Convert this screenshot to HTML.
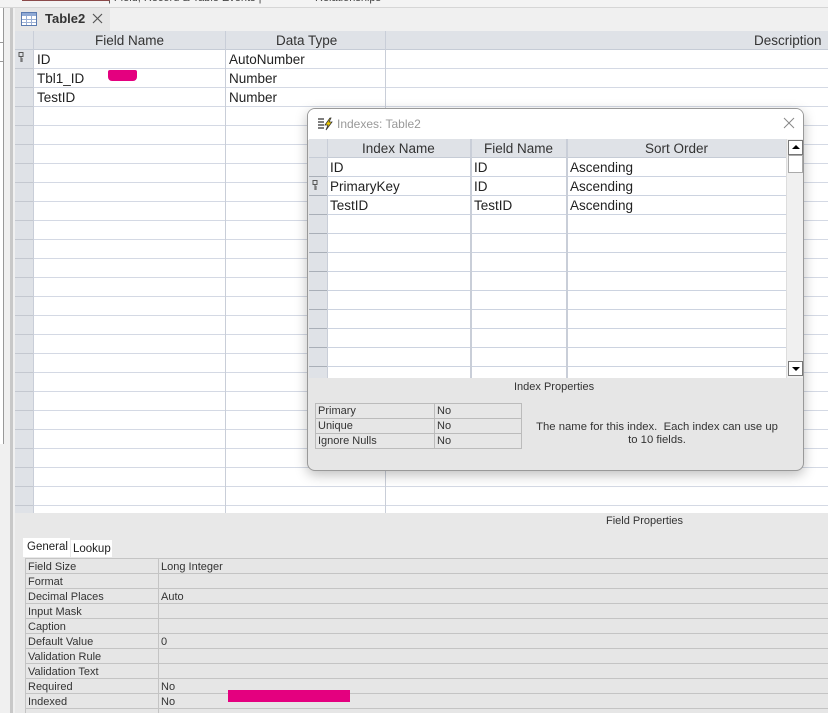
<!DOCTYPE html>
<html><head><meta charset="utf-8"><style>
*{box-sizing:border-box;margin:0;padding:0}
body{width:828px;height:713px;position:relative;overflow:hidden;background:#f0f0f0;font-family:"Liberation Sans",sans-serif;color:#222}
.a{position:absolute}
.t{font-size:13.5px;line-height:19px;white-space:nowrap}
.s{font-size:11px;white-space:nowrap}
</style></head><body>
<div class="a" style="left:0;top:0;width:828px;height:8px;background:#f3f3f3;border-bottom:1px solid #d6d6d6"></div>
<div class="a s" style="left:22px;top:-8px;color:#444">Show/Hide</div>
<div class="a s" style="left:108px;top:-8px;color:#444">| Field, Record &amp; Table Events |</div>
<div class="a s" style="left:315px;top:-8px;color:#444">Relationships</div>
<div class="a" style="left:22px;top:0;width:88px;height:1px;background:#8b4a4a"></div>
<div class="a" style="left:0;top:8px;width:4px;height:436px;background:#fff;border-right:1px solid #999"></div>
<div class="a" style="left:0;top:42px;width:4px;height:20px;border:1px solid #999;border-left:0"></div>
<div class="a" style="left:10px;top:8px;width:3px;height:705px;background:#c8c8c8"></div>
<div class="a" style="left:15px;top:8px;width:813px;height:23px;background:#f0f0f0"></div>
<div class="a" style="left:15px;top:8px;width:95px;height:23px;background:#e6e6e6"></div>
<svg class="a" style="left:21px;top:12px" width="16" height="14"><rect x="0.5" y="0.5" width="15" height="13" fill="#fff" stroke="#5b7bb0"/><rect x="1" y="1" width="14" height="3" fill="#8fa9d4"/><path d="M1 7.5H15M1 10.5H15M5.5 4V13M10.5 4V13" stroke="#9bb0d4"/></svg>
<div class="a" style="left:45px;top:11px;font-size:13px;font-weight:bold;color:#333">Table2</div>
<svg class="a" style="left:92px;top:13px" width="11" height="11"><path d="M1 1L10 10M10 1L1 10" stroke="#555" stroke-width="1.2"/></svg>
<div class="a" style="left:15px;top:31px;width:813px;height:482px;background:#fff repeating-linear-gradient(to bottom,transparent 0 18px,#d4d9e4 18px 19px)"></div>
<div class="a" style="left:15px;top:31px;width:813px;height:19px;background:#dfe2e7;border-bottom:1px solid #c6ccd6"></div>
<div class="a" style="left:15px;top:50px;width:18px;height:463px;background:#dfe2e7 repeating-linear-gradient(to bottom,transparent 0 18px,#c4c8d0 18px 19px)"></div>
<div class="a" style="left:33px;top:31px;width:1px;height:482px;background:#c9ced8"></div>
<div class="a" style="left:225px;top:31px;width:1px;height:482px;background:#c9ced8"></div>
<div class="a" style="left:385px;top:31px;width:1px;height:482px;background:#c9ced8"></div>
<div class="a t" style="left:95px;top:31px;color:#333">Field Name</div>
<div class="a t" style="left:276px;top:31px;color:#333">Data Type</div>
<div class="a t" style="left:754px;top:31px;color:#333">Description</div>
<svg class="a" style="left:18px;top:52px" width="6" height="11"><rect x="1" y="0.5" width="4" height="4" fill="none" stroke="#555"/><path d="M3 4V10M3 7H5M3 9H5" stroke="#555"/></svg>
<div class="a t" style="left:37px;top:50px">ID</div><div class="a t" style="left:229px;top:50px">AutoNumber</div>
<div class="a t" style="left:37px;top:69px">Tbl1_ID</div><div class="a t" style="left:229px;top:69px">Number</div>
<div class="a t" style="left:37px;top:88px">TestID</div><div class="a t" style="left:229px;top:88px">Number</div>
<div class="a" style="left:108px;top:70px;width:29px;height:11px;background:#e4007f;border-radius:2px 2px 4px 4px"></div>
<div class="a" style="left:15px;top:513px;width:813px;height:200px;background:#e8e8e8"></div>
<div class="a s" style="left:606px;top:515px;color:#333">Field Properties</div>
<div class="a" style="left:23px;top:538px;width:47px;height:19px;background:#fff"></div>
<div class="a s" style="left:27px;top:541px;font-size:11.5px">General</div>
<div class="a" style="left:71px;top:540px;width:41px;height:17px;background:#fff"></div>
<div class="a s" style="left:73px;top:543px;font-size:11.5px">Lookup</div>
<div class="a" style="left:25px;top:558px;width:803px;height:155px;background:#e6e6e6 repeating-linear-gradient(to bottom,transparent 0 14px,#c4c4c4 14px 15px);border-left:1px solid #c4c4c4;border-top:1px solid #c4c4c4"></div>
<div class="a" style="left:158px;top:558px;width:1px;height:155px;background:#c4c4c4"></div>
<div class="a s" style="left:28px;top:560px;line-height:15px;color:#333">Field Size<br>Format<br>Decimal Places<br>Input Mask<br>Caption<br>Default Value<br>Validation Rule<br>Validation Text<br>Required<br>Indexed</div>
<div class="a s" style="left:161px;top:560px;line-height:15px;color:#333">Long Integer<br><br>Auto<br><br><br>0<br><br><br>No<br>No</div>
<div class="a" style="left:228px;top:690px;width:122px;height:12px;background:#e4007f"></div>
<div class="a" style="left:307px;top:108px;width:497px;height:363px;background:#e6e6e6;border:1px solid #999;border-radius:8px;box-shadow:0 4px 12px rgba(0,0,0,.25);overflow:hidden">
<div class="a" style="left:0;top:0;width:497px;height:31px;background:#fff"></div>
<svg class="a" style="left:9px;top:8px" width="18" height="14"><path d="M1 2H7M1 5H7M1 8H7M1 11H7" stroke="#333" stroke-width="1.2"/><path d="M13 1L8 8H11L9 13L15 5H12L14 1Z" fill="#f5d000" stroke="#333" stroke-width=".8"/></svg>
<div class="a" style="left:29px;top:8px;font-size:12px;color:#999">Indexes: Table2</div>
<svg class="a" style="left:475px;top:8px" width="12" height="12"><path d="M1 1L11 11M11 1L1 11" stroke="#888" stroke-width="1"/></svg>
<div class="a" style="left:1px;top:30px;width:478px;height:239px;background:#fff repeating-linear-gradient(to bottom,transparent 0 18px,#ccd3e0 18px 19px)"></div>
<div class="a" style="left:1px;top:30px;width:478px;height:19px;background:#dfe2e7;border-bottom:1px solid #c6ccd6"></div>
<div class="a" style="left:1px;top:49px;width:18px;height:220px;background:#dfe2e7 repeating-linear-gradient(to bottom,transparent 0 18px,#a9afb8 18px 19px)"></div>
<div class="a" style="left:19px;top:30px;width:1px;height:239px;background:#c9ced8"></div>
<div class="a" style="left:162px;top:30px;width:2px;height:239px;background:#c9ced8"></div>
<div class="a" style="left:258px;top:30px;width:2px;height:239px;background:#c9ced8"></div>
<div class="a t" style="left:54px;top:30px;color:#333">Index Name</div>
<div class="a t" style="left:176px;top:30px;color:#333">Field Name</div>
<div class="a t" style="left:337px;top:30px;color:#333">Sort Order</div>
<svg class="a" style="left:4px;top:71px" width="6" height="11"><rect x="1" y="0.5" width="4" height="4" fill="none" stroke="#555"/><path d="M3 4V10M3 7H5M3 9H5" stroke="#555"/></svg>
<div class="a t" style="left:22px;top:49px">ID</div><div class="a t" style="left:166px;top:49px">ID</div><div class="a t" style="left:262px;top:49px">Ascending</div>
<div class="a t" style="left:22px;top:68px">PrimaryKey</div><div class="a t" style="left:166px;top:68px">ID</div><div class="a t" style="left:262px;top:68px">Ascending</div>
<div class="a t" style="left:22px;top:87px">TestID</div><div class="a t" style="left:166px;top:87px">TestID</div><div class="a t" style="left:262px;top:87px">Ascending</div>
<div class="a" style="left:478px;top:30px;width:18px;height:239px;background:#f0f0f0;border-left:1px solid #ddd"></div>
<div class="a" style="left:480px;top:31px;width:15px;height:15px;background:#fff;border:1px solid #777"></div>
<div class="a" style="left:484px;top:36px;width:0;height:0;border:4px solid transparent;border-bottom:4px solid #000;border-top:0"></div>
<div class="a" style="left:480px;top:46px;width:15px;height:18px;background:#fff;border:1px solid #aaa"></div>
<div class="a" style="left:480px;top:252px;width:15px;height:15px;background:#fff;border:1px solid #777"></div>
<div class="a" style="left:484px;top:258px;width:0;height:0;border:4px solid transparent;border-top:4px solid #000;border-bottom:0"></div>
<div class="a s" style="left:206px;top:272px;color:#333">Index Properties</div>
<div class="a" style="left:7px;top:294px;width:207px;height:46px;border:1px solid #bbb;background:repeating-linear-gradient(to bottom,transparent 0 14px,#bbb 14px 15px)"></div>
<div class="a" style="left:126px;top:294px;width:1px;height:46px;background:#bbb"></div>
<div class="a s" style="left:10px;top:295px;line-height:15px;color:#333">Primary<br>Unique<br>Ignore Nulls</div>
<div class="a s" style="left:129px;top:295px;line-height:15px;color:#333">No<br>No<br>No</div>
<div class="a s" style="left:226px;top:312px;width:246px;text-align:center;line-height:13px;color:#333;white-space:normal;font-size:11.3px">The name for this index.&nbsp; Each index can use up to 10 fields.</div>
</div>
</body></html>
